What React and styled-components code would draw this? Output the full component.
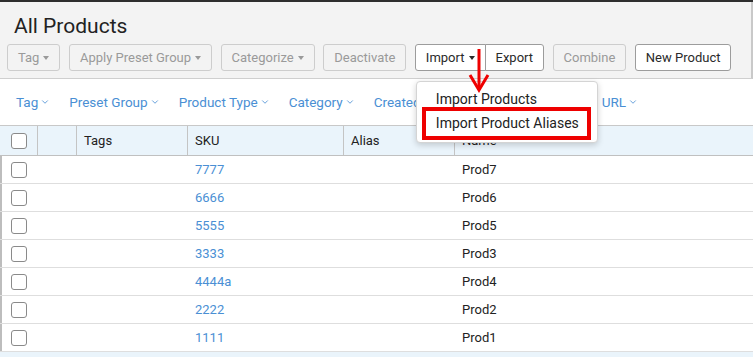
import styled, { createGlobalStyle } from 'styled-components';
import { ChevronDown } from 'lucide-react';

const GlobalStyle = createGlobalStyle`
  html, body {
    margin: 0;
    padding: 0;
    background: #ffffff;
    font-family: Roboto, "Liberation Sans", Arial, sans-serif;
  }
  * { box-sizing: border-box; }
`;

const Page = styled.div`
  width: 753px;
  height: 357px;
  overflow: hidden;
  border-top: 2px solid #2e2e2e;
`;

const Header = styled.div`
  background: #f3f3f3;
  border-right: 2px solid #c9c9c9;
  border-bottom: 1px solid #cfcfcf;
  padding: 11px 0 0 7px;
  height: 77px;
`;

const Title = styled.h1`
  margin: 0 0 5px 7px;
  font-size: 21px;
  font-weight: 400;
  color: #222;
  line-height: 26px;
`;

const Toolbar = styled.div`
  display: flex;
  align-items: center;
  gap: 8.5px;
`;

const Group = styled.div`
  display: flex;
  position: relative;
`;

const Button = styled.button`
  height: 27px;
  padding: 0 10px;
  font-family: inherit;
  font-size: 13px;
  background: ${p => (p.$disabled ? 'transparent' : '#ffffff')};
  color: ${p => (p.$disabled ? '#9a9a9a' : '#2a2a2a')};
  border: 1px solid ${p => (p.$disabled ? '#cdcdcd' : '#9c9c9c')};
  border-radius: ${p => p.$radius || '3px'};
  display: flex;
  align-items: center;
  gap: 4px;
  white-space: nowrap;
  margin-left: ${p => (p.$joined ? '-1px' : '0')};
`;

const Caret = styled.span`
  width: 0;
  height: 0;
  border-left: 3.5px solid transparent;
  border-right: 3.5px solid transparent;
  border-top: 4px solid currentColor;
  display: inline-block;
`;

const Menu = styled.div`
  position: absolute;
  top: 37px;
  left: 1px;
  width: 182px;
  background: #fff;
  border: 1px solid #d4d4d4;
  border-radius: 4px;
  box-shadow: 0 2px 6px rgba(0, 0, 0, 0.18);
  padding: 4px 5px 2px 5px;
  z-index: 5;
`;

const MenuItem = styled.div`
  font-size: 14px;
  color: #222;
  line-height: 20px;
  width: fit-content;
  padding: ${p => (p.$marked ? '2px 8px 3px 10px' : '3px 13px 0 14px')};
  height: ${p => (p.$marked ? '33px' : '21px')};
  border: ${p => (p.$marked ? '4px solid #ee0000' : 'none')};
  white-space: nowrap;
`;

const Arrow = styled.svg`
  position: absolute;
  left: 54px;
  top: 5px;
  z-index: 6;
  overflow: visible;
`;

const FilterBar = styled.div`
  display: flex;
  align-items: center;
  height: 46px;
  padding-left: 16px;
  gap: 19px;
  background: #fff;
`;

const Filter = styled.span`
  color: #4a8fd4;
  font-size: 13.5px;
  display: flex;
  align-items: center;
  gap: 2px;
  margin-left: ${p => p.$gap || '0'};
`;

const Row = styled.div`
  display: grid;
  grid-template-columns: 38px 39px 111px 156px 111px 1fr;
  height: ${p => (p.$head ? '31px' : '28px')};
  background: ${p => (p.$head ? '#eaf4fb' : '#fff')};
  border-top: ${p => (p.$head ? '1px solid #c8c8c8' : 'none')};
  border-bottom: 1px solid ${p => (p.$head ? '#c0c0c0' : '#dedede')};
  box-shadow: ${p => (p.$head ? 'none' : 'inset 2px 0 0 #bdbdbd')};
`;

const Cell = styled.div`
  display: flex;
  align-items: center;
  padding-left: ${p => p.$pad || '7px'};
  font-size: 13px;
  color: ${p => (p.$link ? '#4a8fd4' : '#222')};
  border-right: ${p => (p.$head && !p.$last ? '1px solid #c4c4c4' : 'none')};
`;

const Check = styled.span`
  width: 16px;
  height: 16px;
  border: 1px solid #8a8a8a;
  border-radius: 3px;
  background: #fff;
  display: inline-block;
`;

const FooterStrip = styled.div`
  height: 10px;
  background: #eaf4fb;
`;

const filters = [
  { label: 'Tag' },
  { label: 'Preset Group' },
  { label: 'Product Type' },
  { label: 'Category' },
  { label: 'Created' },
  { label: 'URL', gap: '150px' },
];

const rows = [
  ['7777', 'Prod7'],
  ['6666', 'Prod6'],
  ['5555', 'Prod5'],
  ['3333', 'Prod3'],
  ['4444a', 'Prod4'],
  ['2222', 'Prod2'],
  ['1111', 'Prod1'],
];

export default function App() {
  return (
    <Page>
      <GlobalStyle />
      <Header>
        <Title>All Products</Title>
        <Toolbar>
          <Button $disabled>Tag <Caret /></Button>
          <Button $disabled>Apply Preset Group <Caret /></Button>
          <Button $disabled>Categorize <Caret /></Button>
          <Button $disabled>Deactivate</Button>
          <Group>
            <Button $radius="3px 0 0 3px">Import <Caret /></Button>
            <Button $joined $radius="0 3px 3px 0">Export</Button>
            <Arrow width="20" height="44" viewBox="0 0 20 44">
              <line x1="10" y1="0" x2="10" y2="41" stroke="#ee0000" strokeWidth="3" />
              <polyline points="1,26 10,41 19,26" fill="none" stroke="#ee0000" strokeWidth="3" />
            </Arrow>
            <Menu>
              <MenuItem>Import Products</MenuItem>
              <MenuItem $marked>Import Product Aliases</MenuItem>
            </Menu>
          </Group>
          <Button $disabled>Combine</Button>
          <Button>New Product</Button>
        </Toolbar>
      </Header>
      <FilterBar>
        {filters.map(f => (
          <Filter key={f.label} $gap={f.gap}>
            {f.label} <ChevronDown size={10} strokeWidth={2} />
          </Filter>
        ))}
      </FilterBar>
      <Row $head>
        <Cell $head $pad="11px"><Check /></Cell>
        <Cell $head />
        <Cell $head>Tags</Cell>
        <Cell $head>SKU</Cell>
        <Cell $head>Alias</Cell>
        <Cell $head $last>Name</Cell>
      </Row>
      {rows.map(([sku, name]) => (
        <Row key={sku}>
          <Cell $pad="11px"><Check /></Cell>
          <Cell />
          <Cell />
          <Cell $link>{sku}</Cell>
          <Cell />
          <Cell>{name}</Cell>
        </Row>
      ))}
      <FooterStrip />
    </Page>
  );
}
